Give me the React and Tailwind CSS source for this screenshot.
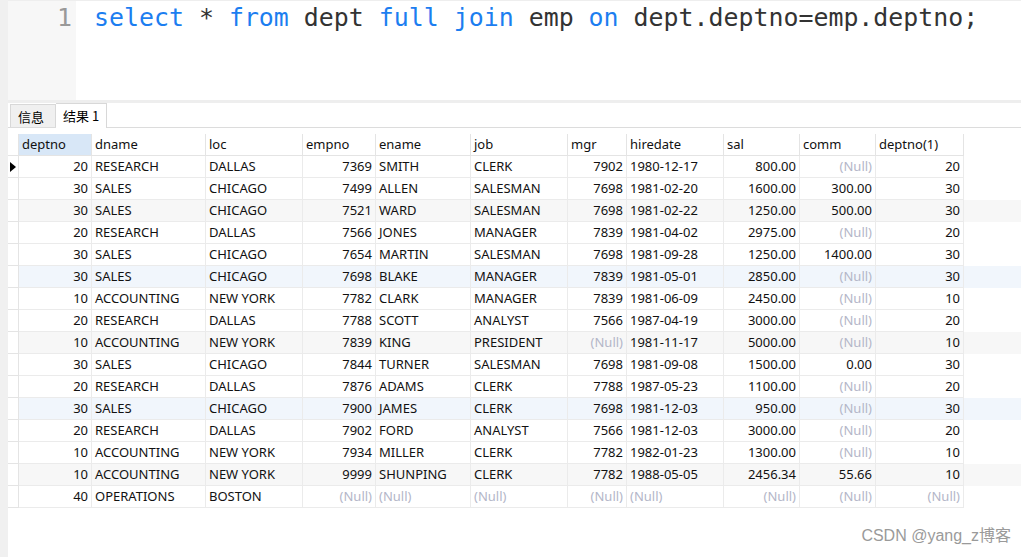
import React from "react";

const cols = [
  { k: "deptno", w: 73, r: true },
  { k: "dname", w: 114 },
  { k: "loc", w: 97 },
  { k: "empno", w: 73, r: true },
  { k: "ename", w: 95 },
  { k: "job", w: 97 },
  { k: "mgr", w: 59, r: true },
  { k: "hiredate", w: 97 },
  { k: "sal", w: 76, r: true },
  { k: "comm", w: 76, r: true },
  { k: "deptno(1)", w: 88, r: true },
];

const N = null;
const rows = [
  [20, "RESEARCH", "DALLAS", 7369, "SMITH", "CLERK", 7902, "1980-12-17", "800.00", N, 20],
  [30, "SALES", "CHICAGO", 7499, "ALLEN", "SALESMAN", 7698, "1981-02-20", "1600.00", "300.00", 30],
  [30, "SALES", "CHICAGO", 7521, "WARD", "SALESMAN", 7698, "1981-02-22", "1250.00", "500.00", 30],
  [20, "RESEARCH", "DALLAS", 7566, "JONES", "MANAGER", 7839, "1981-04-02", "2975.00", N, 20],
  [30, "SALES", "CHICAGO", 7654, "MARTIN", "SALESMAN", 7698, "1981-09-28", "1250.00", "1400.00", 30],
  [30, "SALES", "CHICAGO", 7698, "BLAKE", "MANAGER", 7839, "1981-05-01", "2850.00", N, 30],
  [10, "ACCOUNTING", "NEW YORK", 7782, "CLARK", "MANAGER", 7839, "1981-06-09", "2450.00", N, 10],
  [20, "RESEARCH", "DALLAS", 7788, "SCOTT", "ANALYST", 7566, "1987-04-19", "3000.00", N, 20],
  [10, "ACCOUNTING", "NEW YORK", 7839, "KING", "PRESIDENT", N, "1981-11-17", "5000.00", N, 10],
  [30, "SALES", "CHICAGO", 7844, "TURNER", "SALESMAN", 7698, "1981-09-08", "1500.00", "0.00", 30],
  [20, "RESEARCH", "DALLAS", 7876, "ADAMS", "CLERK", 7788, "1987-05-23", "1100.00", N, 20],
  [30, "SALES", "CHICAGO", 7900, "JAMES", "CLERK", 7698, "1981-12-03", "950.00", N, 30],
  [20, "RESEARCH", "DALLAS", 7902, "FORD", "ANALYST", 7566, "1981-12-03", "3000.00", N, 20],
  [10, "ACCOUNTING", "NEW YORK", 7934, "MILLER", "CLERK", 7782, "1982-01-23", "1300.00", N, 10],
  [10, "ACCOUNTING", "NEW YORK", 9999, "SHUNPING", "CLERK", 7782, "1988-05-05", "2456.34", "55.66", 10],
  [40, "OPERATIONS", "BOSTON", N, N, N, N, N, N, N, N],
];

function rowBg(i) {
  if (i % 6 === 5) return "bg-[#f1f6fc]";
  if (i % 6 === 2) return "bg-[#f7f7f7]";
  return "bg-white";
}

const kw = "text-[#1c7ef0]";
const tx = "text-[#333333]";

export default function App() {
  return (
    <div className="w-[1021px] h-[557px] bg-white flex overflow-hidden relative" style={{ fontFamily: "'Noto Sans', sans-serif" }}>
      <div className="w-[8px] h-full bg-[#f0f0f0] shrink-0" />
      <div className="flex-1 flex flex-col">
        {/* editor */}
        <div className="h-[100px] flex border-t border-[#eeeeee]">
          <div className="w-[68px] bg-[#f7f7f7] flex justify-end pr-[4px] text-[24.9px] leading-[33px] text-[#999999]" style={{ fontFamily: "'DejaVu Sans Mono', monospace" }}>
            1
          </div>
          <div className="flex-1 pl-[18px] text-[24.9px] leading-[33px] whitespace-pre" style={{ fontFamily: "'DejaVu Sans Mono', monospace" }}>
            <span className={kw}>select</span>
            <span className={tx}> * </span>
            <span className={kw}>from</span>
            <span className={tx}> dept </span>
            <span className={kw}>full</span>
            <span className={tx}> </span>
            <span className={kw}>join</span>
            <span className={tx}> emp </span>
            <span className={kw}>on</span>
            <span className={tx}> dept.deptno=emp.deptno;</span>
          </div>
        </div>
        <div className="h-[3px] bg-[#eeeeee]" />
        {/* tabs */}
        <div className="h-[25px] flex items-end border-b border-[#dcdcdc] pl-[2px]" style={{ fontFamily: "'Noto Sans CJK SC', sans-serif" }}>
          <div className="h-[23px] w-[46px] bg-[#f0f0f0] border border-b-0 border-[#d8d8d8] flex items-center pl-[7px] pt-[1px] text-[13px] text-[#000]">信息</div>
          <div className="h-[25px] w-[51px] bg-white border border-b-0 border-l-0 border-[#d8d8d8] flex items-center pl-[7px] text-[13px] text-[#000] -mb-px">结果 1</div>
        </div>
        <div className="h-[6px]" />
        {/* table */}
        <div className="flex flex-col text-[13px] text-[#111]">
          <div className="flex h-[22px]">
            <div className="w-[11px] border-r border-b border-[#e4e4e4]" />
            {cols.map((c, i) => (
              <div key={c.k} className={`border-r border-b border-[#e4e4e4] pl-[3px] flex items-center leading-none ${i === 0 ? "bg-[#d8e7f7]" : "bg-white"}`} style={{ width: c.w }}>
                {c.k}
              </div>
            ))}
          </div>
          {rows.map((r, ri) => (
            <div key={ri} className={`flex h-[22px] ${rowBg(ri)}`}>
              <div className="w-[11px] border-r border-b border-[#e4e4e4] flex items-center justify-center bg-white">
                {ri === 0 && (
                  <svg width="6" height="10" viewBox="0 0 6 10"><path d="M0 0 L6 5 L0 10 Z" fill="#000" /></svg>
                )}
              </div>
              {cols.map((c, ci) => {
                const v = r[ci];
                const isNull = v === null;
                return (
                  <div key={ci} className={`border-r border-b border-[#ebebeb] flex items-center leading-none whitespace-nowrap overflow-hidden ${c.r ? "justify-end pr-[3px]" : "pl-[3px]"} ${isNull ? "text-[#b3b6c8]" : "text-[#111]"}`} style={{ width: c.w }}>
                    {isNull ? "(Null)" : v}
                  </div>
                );
              })}
            </div>
          ))}
        </div>
      </div>
      <div className="absolute right-[10px] bottom-[9px] text-[16px] text-[#9a9a9a]" style={{ fontFamily: "'Liberation Sans', 'Noto Sans CJK SC', sans-serif" }}>
        CSDN @yang_z博客
      </div>
    </div>
  );
}
